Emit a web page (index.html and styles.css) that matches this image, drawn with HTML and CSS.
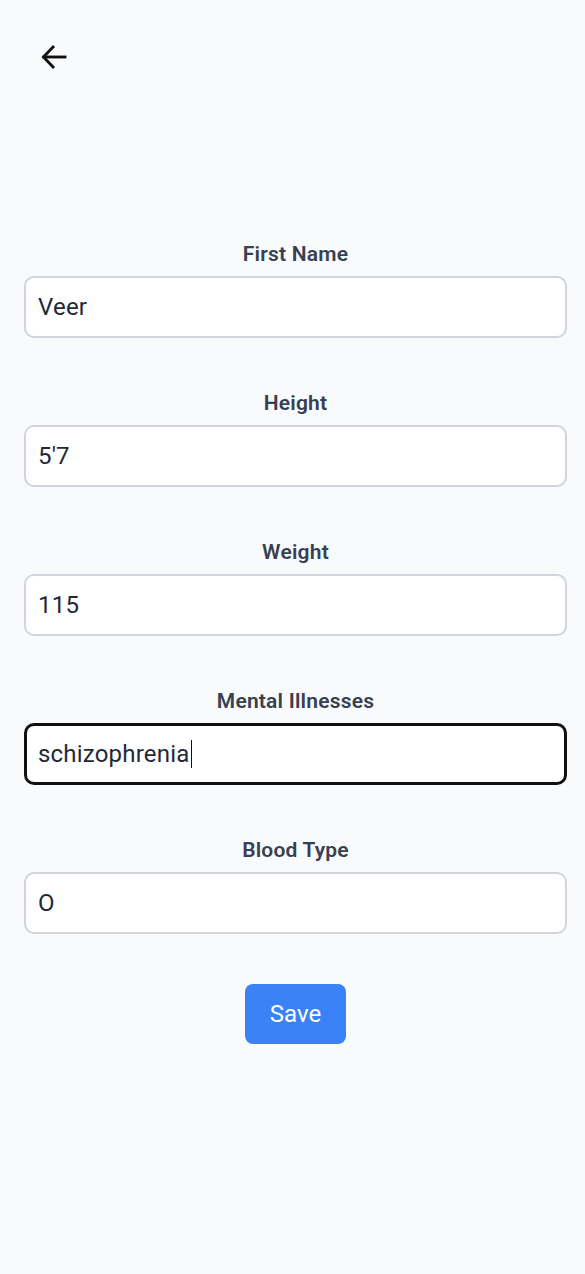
FILE: index.html
```html
<!DOCTYPE html>
<html>
<head>
<meta charset="utf-8">
<link rel="stylesheet" href="styles.css">
</head>
<body>
<div class="page">
  <header class="top">
    <button class="back" aria-label="Back">
      <svg width="28" height="28" viewBox="0 0 28 28" fill="none" stroke="#111" stroke-width="2.9" stroke-linecap="square" stroke-linejoin="miter">
        <path d="M25 14H4"/>
        <path d="M13 4L3.5 14L13 24"/>
      </svg>
    </button>
  </header>
  <form class="form">
    <div class="field">
      <label class="label">First Name</label>
      <div class="input">Veer</div>
    </div>
    <div class="field">
      <label class="label">Height</label>
      <div class="input">5'7</div>
    </div>
    <div class="field">
      <label class="label">Weight</label>
      <div class="input">115</div>
    </div>
    <div class="field">
      <label class="label">Mental Illnesses</label>
      <div class="input focused">schizophrenia<span class="caret"></span></div>
    </div>
    <div class="field">
      <label class="label">Blood Type</label>
      <div class="input">O</div>
    </div>
    <div class="actions">
      <button type="button" class="save">Save</button>
    </div>
  </form>
</div>
</body>
</html>
```
FILE: styles.css
```css
html, body {
  margin: 0;
  padding: 0;
  background: #f9fafb;
  font-family: Roboto, "Liberation Sans", sans-serif;
}
.page {
  min-height: 1274px;
  box-sizing: border-box;
}
.top {
  padding: 43px 0 0 40px;
  height: 242px;
  box-sizing: border-box;
}
.back {
  border: 0;
  background: none;
  padding: 0;
  display: block;
  width: 28px;
  height: 28px;
}
.back svg { display: block; }
.form {
  padding: 0 18px 0 24px;
  display: flex;
  flex-direction: column;
}
.field {
  display: flex;
  flex-direction: column;
  margin-top: 53px;
}
.field:first-child { margin-top: 0; }
.label {
  text-align: center;
  font-size: 21px;
  font-weight: 600;
  letter-spacing: 0.2px;
  color: #374151;
  line-height: 24px;
  margin-bottom: 10px;
}
.input {
  height: 62px;
  box-sizing: border-box;
  background: #fff;
  border: 2px solid #d1d5db;
  border-radius: 10px;
  padding: 0 12px;
  display: flex;
  align-items: center;
  font-size: 24px;
  letter-spacing: 0.2px;
  color: #1f2937;
}
.input.focused {
  border: 3px solid #111;
  padding: 0 11px;
}
.caret {
  display: inline-block;
  width: 1.5px;
  height: 28px;
  background: #111;
  margin-left: 1px;
}
.actions {
  display: flex;
  justify-content: center;
  margin-top: 50px;
}
.save {
  width: 101px;
  height: 60px;
  border: 0;
  border-radius: 8px;
  background: #3b82f6;
  color: #fff;
  font-family: Roboto, "Liberation Sans", sans-serif;
  font-size: 24px;
}
```
